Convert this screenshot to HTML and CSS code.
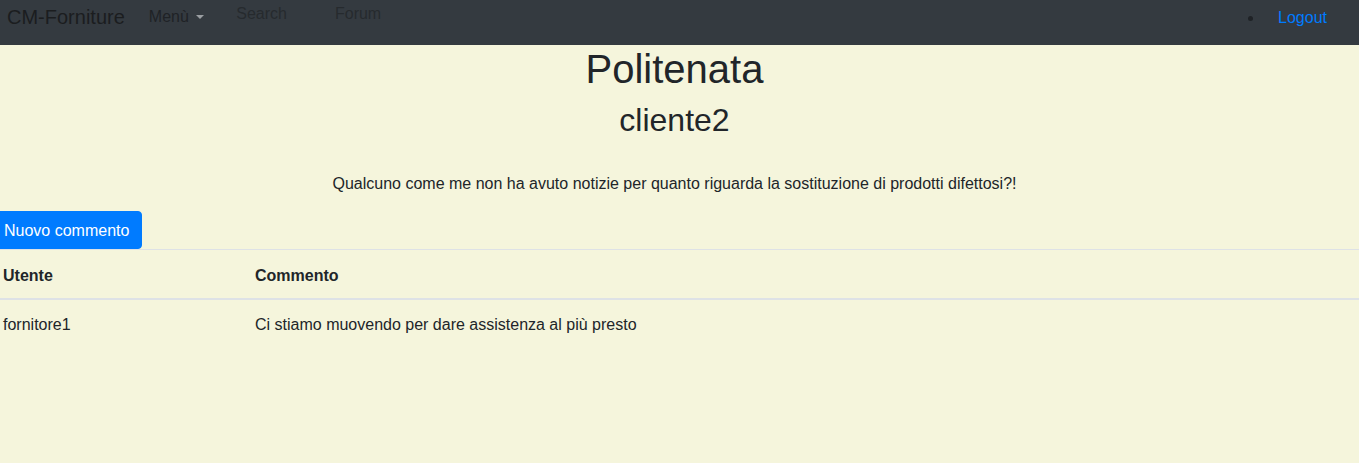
FILE: index.html
```html
<!DOCTYPE html>
<html lang="it">
<head>
<meta charset="utf-8">
<title>Forum</title>
<link rel="stylesheet" href="styles.css">
</head>
<body>
<nav class="navbar">
  <a class="brand" href="#">CM-Forniture</a>
  <a class="menu" href="#">Menù <span class="caret"></span></a>
  <a class="navlink search" href="#">Search</a>
  <a class="navlink forum" href="#">Forum</a>
  <div class="spacer"></div>
  <ul class="right"><li><a class="logout" href="#">Logout</a></li></ul>
</nav>
<main class="content">
  <h1 class="title">Politenata</h1>
  <h2 class="subtitle">cliente2</h2>
  <p class="question">Qualcuno come me non ha avuto notizie per quanto riguarda la sostituzione di prodotti difettosi?!</p>
  <button class="btn">Nuovo commento</button>
  <table class="table">
    <thead>
      <tr><th class="c1">Utente</th><th>Commento</th></tr>
    </thead>
    <tbody>
      <tr><td class="c1">fornitore1</td><td>Ci stiamo muovendo per dare assistenza al più presto</td></tr>
    </tbody>
  </table>
</main>
</body>
</html>
```
FILE: styles.css
```css
* { box-sizing: border-box; }
html, body {
  margin: 0;
  padding: 0;
  background: #f5f5dc;
  font-family: "Liberation Sans", Arial, sans-serif;
  font-size: 16px;
  line-height: 1.5;
  color: #212529;
}
a { text-decoration: none; }
.navbar {
  height: 45px;
  background: #343a40;
  display: flex;
  align-items: flex-start;
  padding: 0 0 0 7px;
}
.brand {
  font-size: 20px;
  line-height: 30px;
  margin-top: 2px;
  color: #1b1d1f;
}
.menu {
  margin-left: 24px;
  margin-top: 5px;
  line-height: 24px;
  color: #1f2226;
}
.caret {
  display: inline-block;
  width: 0; height: 0;
  border-top: 4.8px solid #9a9ea2;
  border-left: 4.2px solid transparent;
  border-right: 4.2px solid transparent;
  vertical-align: 3px;
  margin-left: 3px;
}
.navlink {
  line-height: 24px;
  margin-top: 2px;
  color: #262a2e;
}
.search { margin-left: 32px; }
.forum { margin-left: 48px; }
.spacer { flex: 1; }
.right {
  margin: 6px 32px 0 0;
  padding: 0;
  list-style: disc;
  color: #1f2226;
  line-height: 24px;
}
.right li { margin-left: 0; }
.logout { color: #007bff; margin-left: 14px; }
.content { text-align: center; padding-right: 10px; }
.title {
  margin: 0 0 8px;
  font-size: 40px;
  font-weight: 500;
  line-height: 1.2;
}
.subtitle {
  margin: 0;
  font-size: 32px;
  font-weight: 500;
  line-height: 1.2;
}
.question {
  margin: 33px 0 15px;
}
.btn {
  display: block;
  margin-left: -9px;
  height: 38px;
  padding: 7px 12px 5px;
  background: #007bff;
  color: #fff;
  border: 1px solid #007bff;
  border-radius: 4px;
  font: inherit;
  line-height: 24px;
}
.table {
  width: calc(100% + 10px);
  border-collapse: collapse;
  text-align: left;
}
.table th, .table td {
  padding: 14px 3px 10px;
  border-top: 1px solid #dee2e6;
  vertical-align: top;
}
.table th { font-weight: bold; border-bottom: 2px solid #dee2e6; }
.table tbody td { border-top: none; padding-top: 13px; }
.table .c1 { width: 252px; }
```
